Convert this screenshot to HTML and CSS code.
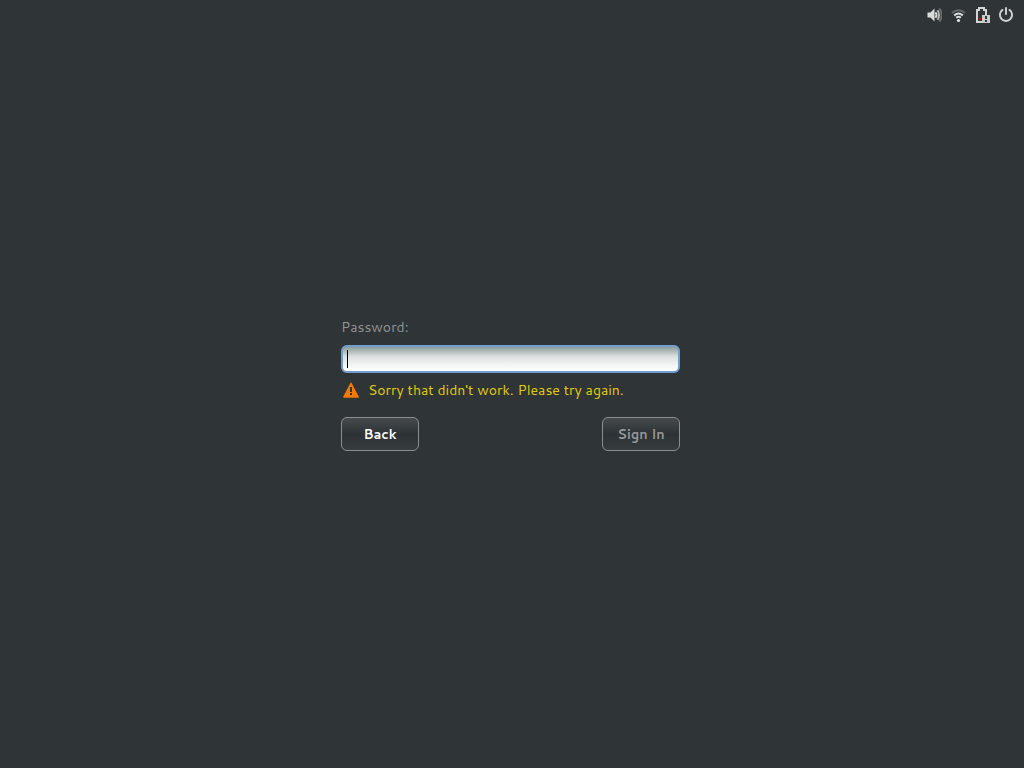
FILE: index.html
```html
<!DOCTYPE html>
<html lang="en">
<head>
<meta charset="utf-8">
<title>Sign In</title>
<link rel="stylesheet" href="styles.css">
</head>
<body class="screen">
<header class="panel">
  <button class="status" type="button" aria-label="Volume">
    <svg viewBox="0 0 16 16" width="16" height="16">
      <path fill="#dcdcdc" d="M1.500 5.500H4.500L8.500 1.500V14.500L4.500 10.500H1.500z"/>
      <g fill="none" stroke-width="1.900">
        <path stroke="#dcdcdc" d="M9.500 5.200Q11.600 8 9.500 10.800"/>
        <path stroke="#b8bbbb" d="M11.500 3.300Q14.700 8 11.500 12.700"/>
        <path stroke="#6c7071" d="M13.400 1.500Q18 8 13.400 14.500"/>
      </g>
    </svg>
  </button>
  <button class="status" type="button" aria-label="Wireless network">
    <svg viewBox="0 0 16 16" width="16" height="16">
      <g fill="none" stroke-width="2">
        <path stroke="#65696a" d="M2 6Q8.500 .5 15 6"/>
        <path stroke="#dcdcdc" d="M4.200 8.500Q8.500 4.600 12.800 8.500"/>
        <path stroke="#dcdcdc" d="M6.200 10.800Q8.500 8.600 10.800 10.800"/>
      </g>
      <circle cx="8.500" cy="13.500" r="1.600" fill="#e4e4e4"/>
    </svg>
  </button>
  <button class="status" type="button" aria-label="Battery low">
    <svg viewBox="0 0 16 16" width="16" height="16">
      <path fill="none" stroke="#d4d4d4" stroke-width="2" d="M8 15H3V3H5V1H10V3H12V8"/>
      <path fill="#e00000" d="M5 11h2v2H5z"/>
      <path fill="#c9cbcb" d="M8 8h8v8H8z"/>
      <path fill="#303536" d="M11 9h2v3h-2zM11 13h2v2h-2z"/>
    </svg>
  </button>
  <button class="status" type="button" aria-label="Power">
    <svg viewBox="0 0 16 16" width="16" height="16">
      <path fill="none" stroke="#d0d2d2" stroke-width="1.900" stroke-linecap="round" d="M4.500 2.900A6.100 6.100 0 1 0 11.500 2.900M8 1V7"/>
    </svg>
  </button>
</header>
<main class="stage">
  <form class="login">
    <label class="prompt" for="password">Password:</label>
    <input class="entry" id="password" type="password" aria-describedby="message">
    <p class="message" id="message" role="alert">
      <svg viewBox="0 0 16 16" width="16" height="16" aria-hidden="true">
        <path fill="#f57900" stroke="#f57900" stroke-width="1.400" stroke-linejoin="round" d="M8 1.200L15.200 15H.8z"/>
        <path fill="#30363a" d="M7 5h2v5H7zM7 11h2v2H7z"/>
      </svg>
      <span>Sorry that didn't work. Please try again.</span>
    </p>
    <div class="actions">
      <button class="button" type="button">Back</button>
      <button class="button" type="submit" disabled>Sign In</button>
    </div>
  </form>
</main>
</body>
</html>
```
FILE: styles.css
```css
* { box-sizing: border-box; }

.screen {
  display: flex;
  flex-direction: column;
  min-height: 100vh;
  margin: 0;
  background: #2f3437;
  color: #fff;
  font: 14px/18px Cantarell, Lato, "Noto Sans", sans-serif;
}

.panel {
  display: flex;
  justify-content: flex-end;
  align-items: center;
  gap: 8px;
  height: 30px;
  padding: 0 10px;
}

.status {
  display: flex;
  padding: 0;
  border: 0;
  background: none;
}

.stage {
  display: flex;
  flex: 1;
  justify-content: center;
  align-items: center;
  padding: 0 3px 29px 0;
}

.login {
  display: flex;
  flex-direction: column;
  width: 100%;
  max-width: 339px;
}

.prompt {
  margin-bottom: 9px;
  color: #8f9293;
}

.entry {
  width: 100%;
  height: 28px;
  padding: 0 4px;
  border: 2px solid #729fcf;
  border-radius: 6px;
  outline: 0;
  background:
    linear-gradient(#000, #000) 4px center / 1px 18px no-repeat,
    linear-gradient(#8b9c99, #d9dedd 38%, #eeefef 65%, #fff);
  color: #000;
  font: inherit;
}

.message {
  display: flex;
  align-items: center;
  gap: 9px;
  margin: 8px 0 18px;
  padding-left: 2px;
  color: #e0cc08;
}

.actions {
  display: flex;
  justify-content: space-between;
}

.button {
  width: 78px;
  height: 34px;
  padding: 0;
  border: 1px solid #8b8f90;
  border-radius: 6px;
  background: linear-gradient(#464a4c, #2d3234 50%, #363b3d);
  color: #fff;
  font: inherit;
  font-size: 13px;
  font-weight: 700;
}

.button:disabled { color: #97999a; }
```
